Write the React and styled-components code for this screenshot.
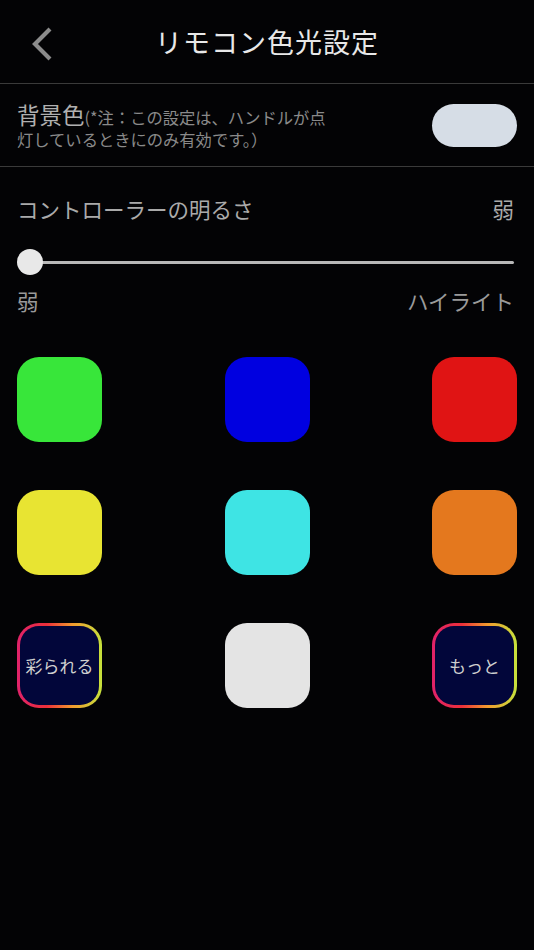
import React from 'react';
import styled, { createGlobalStyle } from 'styled-components';

const GlobalStyle = createGlobalStyle`
  html, body {
    margin: 0;
    padding: 0;
    background: #030305;
  }
  body {
    font-family: "Noto Sans CJK JP", "Noto Sans", sans-serif;
  }
`;

const Page = styled.div`
  width: 534px;
  min-height: 950px;
  background: #030305;
  color: #e6e6e6;
`;

const Header = styled.header`
  position: relative;
  height: 84px;
  display: flex;
  align-items: center;
  justify-content: center;
  border-bottom: 1px solid #3a3a3a;
  box-sizing: border-box;
`;

const BackButton = styled.button`
  position: absolute;
  left: 26px;
  top: 24px;
  width: 32px;
  height: 40px;
  padding: 0;
  border: none;
  background: transparent;
  display: flex;
  align-items: center;
  justify-content: center;
`;

const Title = styled.h1`
  margin: 0 0 0 0;
  font-size: 27px;
  font-weight: 400;
  color: #e8e8e8;
  letter-spacing: 1px;
`;

const SettingRow = styled.div`
  height: 83px;
  display: flex;
  align-items: center;
  justify-content: space-between;
  padding: 0 17px 0 17px;
  border-bottom: 1px solid #3a3a3a;
  box-sizing: border-box;
`;

const SettingText = styled.div`
  font-size: 16.3px;
  line-height: 22px;
  color: #8a8a8a;
  margin-top: 2px;
`;

const SettingName = styled.span`
  font-size: 22.5px;
  line-height: 22px;
  color: #b0b0b0;
`;

const Toggle = styled.div`
  width: 85px;
  height: 43px;
  border-radius: 22px;
  background: #d6dde6;
`;

const Brightness = styled.section`
  padding: 26px 20px 0 17px;
`;

const LabelRow = styled.div`
  display: flex;
  justify-content: space-between;
  align-items: center;
  font-size: 21.5px;
  line-height: 32px;
  color: ${(p) => (p.$dim ? '#9a9a9a' : '#aaaaaa')};
`;

const Slider = styled.div`
  position: relative;
  height: 26px;
  margin: 24px 0 10px 3px;
  display: flex;
  align-items: center;
`;

const Track = styled.div`
  flex: 1;
  height: 3px;
  border-radius: 2px;
  background: #b8b8b8;
`;

const Thumb = styled.div`
  position: absolute;
  left: -3px;
  top: 0;
  width: 26px;
  height: 26px;
  border-radius: 50%;
  background: #e8e8e8;
`;

const Grid = styled.div`
  display: grid;
  grid-template-columns: repeat(3, 85px);
  justify-content: space-between;
  row-gap: 48px;
  padding: 40px 17px 0 17px;
`;

const Swatch = styled.div`
  width: 85px;
  height: 85px;
  border-radius: 22px;
  background: ${(p) => p.$color};
  box-sizing: border-box;
`;

const GradientSwatch = styled.div`
  width: 85px;
  height: 85px;
  border-radius: 22px;
  padding: 3px;
  box-sizing: border-box;
  background: linear-gradient(90deg, #e0226a 0%, #ec2f3a 35%, #f29a2e 65%, #c6e23c 100%);
`;

const SwatchInner = styled.div`
  width: 100%;
  height: 100%;
  border-radius: 19px;
  background: #02063a;
  display: flex;
  align-items: center;
  justify-content: center;
  font-size: 17px;
  color: #cfcfcf;
`;

const colors = ['#38e63a', '#0000e0', '#e01414', '#e8e432', '#3ee4e4', '#e4781e'];

export default function App() {
  return (
    <Page>
      <GlobalStyle />
      <Header>
        <BackButton aria-label="back">
          <svg width="26" height="36" viewBox="0 0 26 36">
            <path d="M21 3 L6 18 L21 33" fill="none" stroke="#8c8c8c" strokeWidth="4.2" />
          </svg>
        </BackButton>
        <Title>リモコン色光設定</Title>
      </Header>

      <SettingRow>
        <SettingText>
          <SettingName>背景色</SettingName>(*注：この設定は、ハンドルが点
          <br />
          灯しているときにのみ有効です。）
        </SettingText>
        <Toggle />
      </SettingRow>

      <Brightness>
        <LabelRow>
          <span>コントローラーの明るさ</span>
          <span>弱</span>
        </LabelRow>
        <Slider>
          <Track />
          <Thumb />
        </Slider>
        <LabelRow $dim>
          <span>弱</span>
          <span>ハイライト</span>
        </LabelRow>
      </Brightness>

      <Grid>
        {colors.map((c) => (
          <Swatch key={c} $color={c} />
        ))}
        <GradientSwatch>
          <SwatchInner>彩られる</SwatchInner>
        </GradientSwatch>
        <Swatch $color="#e4e4e4" />
        <GradientSwatch>
          <SwatchInner>もっと</SwatchInner>
        </GradientSwatch>
      </Grid>
    </Page>
  );
}
